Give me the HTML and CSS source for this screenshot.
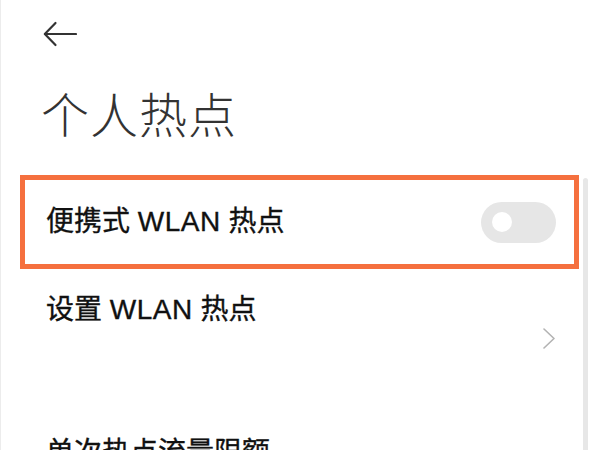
FILE: index.html
```html
<!DOCTYPE html>
<html lang="zh-CN">
<head>
<meta charset="utf-8">
<title>个人热点</title>
<link rel="stylesheet" href="styles.css">
</head>
<body>
<div class="page">
  <div class="topbar">
    <svg class="back" width="34" height="26" viewBox="0 0 34 26">
      <path d="M2 13 H33" fill="none" stroke="#333" stroke-width="2.2" stroke-linecap="round"/>
      <path d="M12.5 2 L1.8 13 L12.5 24" fill="none" stroke="#333" stroke-width="2.2" stroke-linecap="round" stroke-linejoin="round"/>
    </svg>
  </div>
  <h1 class="title">个人热点</h1>
  <div class="row row-highlight">
    <span class="row-label">便携式 <span class="latin">WLAN</span> 热点</span>
    <span class="toggle"><span class="knob"></span></span>
  </div>
  <div class="row row-nav">
    <span class="row-label">设置 <span class="latin">WLAN</span> 热点</span>
    <svg class="chevron" width="12" height="21" viewBox="0 0 12 21">
      <path d="M1 1 L11 10.5 L1 20" fill="none" stroke="#b3b3b3" stroke-width="1.6" stroke-linecap="round" stroke-linejoin="round"/>
    </svg>
  </div>
  <div class="row row-plain">
    <span class="row-label">单次热点流量限额</span>
  </div>
  <div class="scroll-indicator"></div>
</div>
</body>
</html>
```
FILE: styles.css
```css
html, body {
  margin: 0;
  padding: 0;
  background: #ffffff;
}
body {
  font-family: "Noto Sans CJK SC", "Noto Sans", sans-serif;
  color: #000;
  box-shadow: inset 1px 0 #ececec;
  width: 600px;
  height: 450px;
  overflow: hidden;
}
.page {
  position: relative;
  height: 450px;
  overflow: hidden;
}
.topbar {
  height: 68px;
  display: flex;
  align-items: center;
  padding-left: 43px;
}
.back {
  display: block;
}
.title {
  margin: 0 0 31px 0;
  padding: 12px 0 0 41px;
  font-size: 48px;
  line-height: 64px;
  font-weight: 300;
  letter-spacing: 1px;
  color: #333;
}
.row {
  display: flex;
  align-items: center;
}
.row-label {
  font-family: "Liberation Sans", "Noto Sans CJK SC", sans-serif;
  font-size: 28px;
  line-height: 40px;
  font-weight: 400;
  color: #111;
  -webkit-text-stroke: 0.35px #111;
}
.latin {
  letter-spacing: 0.5px;
}
.row-highlight {
  margin: 0 21px 0 20px;
  height: 84px;
  border: 5px solid #f5703e;
  padding: 0 18px 0 21px;
  justify-content: space-between;
}
.toggle {
  width: 75px;
  height: 41px;
  border-radius: 21px;
  background: #e6e6e6;
  display: flex;
  align-items: center;
  padding-left: 11px;
  box-sizing: border-box;
}
.knob {
  width: 20px;
  height: 20px;
  border-radius: 50%;
  background: #fff;
}
.row-nav {
  height: 139px;
  box-sizing: border-box;
  padding: 21px 45px 0 46px;
  justify-content: space-between;
  align-items: flex-start;
}
.chevron {
  align-self: center;
  margin-top: -21px;
}
.row-plain {
  margin-top: 25px;
  padding-left: 46px;
}
.scroll-indicator {
  position: absolute;
  left: 583px;
  top: 178px;
  bottom: 0;
  width: 5px;
  border-radius: 3px 3px 0 0;
  background: #e7e7e7;
}
```
